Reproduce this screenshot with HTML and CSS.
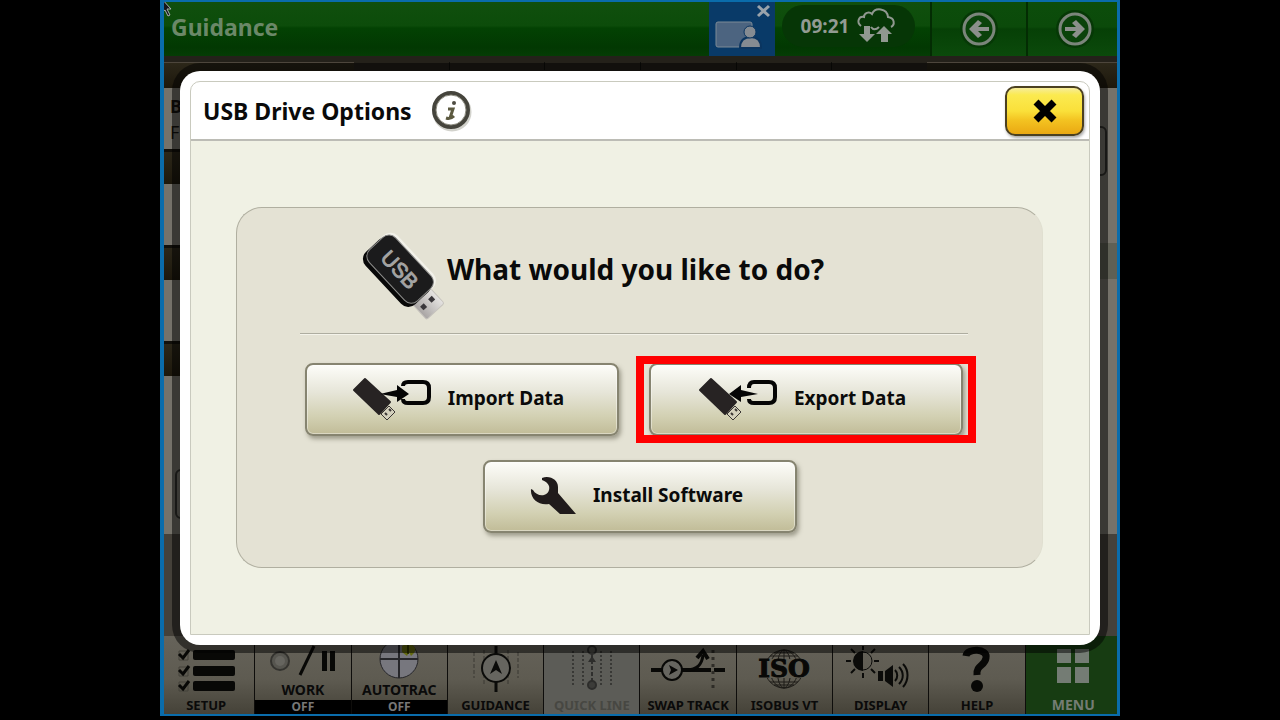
FILE: index.html
```html
<!DOCTYPE html>
<html lang="en">
<head>
    <meta charset="UTF-8">
    <meta name="viewport" content="width=device-width, initial-scale=1.0">
    <title>Guidance - USB Drive Options</title>
    <link rel="stylesheet" href="styles.css">
</head>
<body>
    <div class="display">
        <header class="topbar">
            <h1 class="topbar-title">Guidance</h1>
            <button class="remote" aria-label="Remote display access">
                <svg width="66" height="50" viewBox="0 0 66 50">
                    <rect x="7" y="18" width="36" height="25" rx="2" fill="#4c6480" stroke="#7d8a96"/>
                    <path d="M31 44c0-7 4-11 11-11s10 4 10 11z" fill="#858b92" stroke="#0b3560" stroke-width="2"/>
                    <circle cx="41" cy="28" r="6" fill="#858b92" stroke="#0b3560" stroke-width="1"/>
                    <path d="M49 2l11 10M60 2L49 12" stroke="#9aa3ab" stroke-width="3"/>
                </svg>
            </button>
            <div class="status">
                <span>09:21</span>
                <svg width="40" height="36" viewBox="0 0 40 36">
                    <path d="M5 18C0 14 3 8 8 9c0-4 5-6 8-3 3-7 15-6 16 3 7 1 7 8 3 10M15 19c2 3 5 3 8 0" fill="none" stroke="#909890" stroke-width="2"/>
                    <path d="M8 18h6v8h5l-8 8-8-8h5z M25 34v-8h-5l8-8 8 8h-4v8z" fill="#909890"/>
                </svg>
            </div>
            <button class="nav-btn" aria-label="Back">
                <svg width="38" height="38" viewBox="0 0 38 38">
                    <circle cx="19" cy="19" r="19" fill="#063806"/>
                    <circle cx="19" cy="19" r="15" fill="#0a420a" stroke="#7b857b" stroke-width="3"/>
                    <path d="M9 19l9-9 4 3-4 4h11v4H18l4 4-4 3z" fill="#8b8f8b"/>
                </svg>
            </button>
            <button class="nav-btn" aria-label="Forward">
                <svg width="38" height="38" viewBox="0 0 38 38">
                    <circle cx="19" cy="19" r="19" fill="#063806"/>
                    <circle cx="19" cy="19" r="15" fill="#0a420a" stroke="#7b857b" stroke-width="3"/>
                    <path d="M29 19l-9-9-4 3 4 4H9v4h11l-4 4 4 3z" fill="#8b8f8b"/>
                </svg>
            </button>
        </header>

        <main class="workspace">
            <div class="column">
                <div class="bar bar-top"></div>
                <div class="tile"><b>B</b><span>F</span></div>
                <div class="bar"></div>
                <div class="tile"></div>
                <div class="bar"></div>
                <div class="tile"></div>
                <div class="bar"></div>
                <div class="tile tile-large"><div class="ghost-btn"></div></div>
            </div>
            <div class="middle"><i></i><i></i><i></i><i></i><i></i></div>
            <div class="column column-right">
                <div class="bar bar-top"></div>
                <div class="tile tile-tall"><div class="ghost-btn"></div></div>
                <div class="bar bar-soft"></div>
                <div class="tile tile-large"></div>
            </div>
        </main>

        <nav class="tabs">
            <button class="tab">
                <svg class="icon" width="60" height="48" viewBox="0 0 60 48">
                    <g fill="#080806">
                        <rect x="17" y="4" width="42" height="10" rx="2"/>
                        <rect x="17" y="20" width="42" height="10" rx="2"/>
                        <rect x="17" y="35" width="42" height="10" rx="2"/>
                    </g>
                    <path d="M3 5h9v9H3zM3 21h9v9H3zM3 36h9v9H3z" fill="none" stroke="#45423a"/>
                    <path d="M3 8l4 4 6-8M3 24l4 4 6-8M3 39l4 4 6-8" fill="none" stroke="#080806" stroke-width="3"/>
                </svg>
                <span>SETUP</span>
            </button>
            <button class="tab tab-state">
                <svg class="icon" width="70" height="32" viewBox="0 0 70 32">
                    <circle cx="12" cy="15" r="9" fill="#56554f" stroke="#34332f" stroke-width="2"/>
                    <circle cx="12" cy="15" r="5" fill="#66655f"/>
                    <path d="M32 29L46 0" stroke="#080806" stroke-width="3"/>
                    <path d="M54 5h5v20h-5zM62 5h5v20h-5z" fill="#080806"/>
                </svg>
                <span>WORK</span>
                <small>OFF</small>
            </button>
            <button class="tab tab-state">
                <svg class="icon" width="44" height="36" viewBox="0 0 44 36">
                    <circle cx="22" cy="17" r="19" fill="#77777e" stroke="#26262a"/>
                    <path d="M22 0v36M3 17h38" stroke="#26262a" stroke-width="2"/>
                    <path d="M25 4c4-3 11-3 13 2 1 4-2 6-4 8l-2-4-2 4-5-4z" fill="#646b10"/>
                    <path d="M31 2v10" stroke="#303600" stroke-width="2"/>
                </svg>
                <span>AUTOTRAC</span>
                <small>OFF</small>
            </button>
            <button class="tab">
                <svg class="icon" width="52" height="48" viewBox="0 0 52 48">
                    <path d="M26 0v46" stroke="#0b0b09" stroke-width="3"/>
                    <path d="M4 6v26M48 6v26M14 4v34M38 4v34" stroke="#3b3932" stroke-dasharray="4 2"/>
                    <circle cx="26" cy="22" r="14" fill="#66655f" stroke="#0b0b09" stroke-width="2"/>
                    <path d="M26 14l6 14-6-4-6 4z" fill="#0b0b09"/>
                </svg>
                <span>GUIDANCE</span>
            </button>
            <button class="tab tab-disabled" disabled>
                <svg class="icon" width="48" height="48" viewBox="0 0 48 48">
                    <path d="M5 5v36M15 5v36M33 5v36M43 5v36" stroke="#383835" stroke-width="2" stroke-dasharray="2 2"/>
                    <path d="M24 8v30" stroke="#2f2f2d" stroke-width="2" stroke-dasharray="4 2"/>
                    <circle cx="24" cy="4" r="4" fill="#55554f" stroke="#2d2d2b" stroke-width="2"/>
                    <circle cx="24" cy="39" r="4" fill="#3c3c39" stroke="#2d2d2b" stroke-width="2"/>
                    <path d="M24 10l4 6h-8z" fill="#2d2d2b"/>
                </svg>
                <span>QUICK LINE</span>
            </button>
            <button class="tab">
                <svg class="icon" width="76" height="48" viewBox="0 0 76 48">
                    <path d="M1 24h60M64 24h11" stroke="#080806" stroke-width="4"/>
                    <path d="M36 24c12 0 16-6 17-15" fill="none" stroke="#080806" stroke-width="3"/>
                    <path d="M47 12l6-7 5 8" fill="none" stroke="#080806" stroke-width="4"/>
                    <path d="M63 4v42" stroke="#2e2c27" stroke-width="3" stroke-dasharray="3 4"/>
                    <circle cx="22" cy="24" r="10" fill="#66655f" stroke="#080806" stroke-width="2"/>
                    <path d="M28 24l-9-5 2 5-2 5z" fill="#080806"/>
                </svg>
                <span>SWAP TRACK</span>
            </button>
            <button class="tab">
                <svg class="icon" width="52" height="48" viewBox="0 0 52 48">
                    <g fill="none" stroke="#1d1b17">
                        <circle cx="26" cy="23" r="19"/>
                        <ellipse cx="26" cy="23" rx="7" ry="19"/>
                        <ellipse cx="26" cy="23" rx="14" ry="19"/>
                        <path d="M26 4v38M12 10h28M16 7h20M12 36h28M16 39h20"/>
                    </g>
                    <path d="M4 13h44v19H4z" fill="#605d53"/>
                    <text class="iso" x="26" y="31" text-anchor="middle">ISO</text>
                </svg>
                <span>ISOBUS VT</span>
            </button>
            <button class="tab">
                <svg class="icon" width="64" height="48" viewBox="0 0 64 48">
                    <g stroke="#0b0b09" stroke-width="2" fill="none">
                        <path d="M14 0v4M14 27v5M-3 15h5M25 15h5M2 3l4 4M26 3l-4 4M2 27l4-4M26 27l-4-4"/>
                        <circle cx="14" cy="15" r="9" stroke-width="1"/>
                        <path d="M46 24c3 3 3 8 0 11M50 21c5 5 5 12 0 17M54 18c6 6 6 16 0 23"/>
                    </g>
                    <path d="M14 5a10 10 0 0 0 0 20z" fill="#0b0b09"/>
                    <path d="M29 25h5v10h-5zM36 25l8-6v22l-8-6z" fill="#0b0b09"/>
                </svg>
                <span>DISPLAY</span>
            </button>
            <button class="tab">
                <svg class="icon" width="30" height="48" viewBox="0 0 30 48">
                    <path d="M4 10C5 2 26 2 24 12c-1 8-10 7-9 17" fill="none" stroke="#080806" stroke-width="7"/>
                    <circle cx="15" cy="40" r="6" fill="#080806"/>
                </svg>
                <span>HELP</span>
            </button>
            <button class="tab tab-menu">
                <svg class="icon" width="34" height="48" viewBox="0 0 34 48">
                    <path d="M1 3h14v14H1zM19 3h14v14H19zM1 21h14v16H1zM19 21h14v16H19z" fill="#747c74"/>
                </svg>
                <span>MENU</span>
            </button>
        </nav>

        <section class="dialog" role="dialog" aria-labelledby="dialog-title">
            <div class="dialog-frame">
                <div class="dialog-header">
                    <h2 id="dialog-title">USB Drive Options</h2>
                    <button class="info-btn" aria-label="Information">
                        <svg width="42" height="42" viewBox="0 0 42 42">
                            <circle cx="22" cy="22" r="18" fill="none" stroke="#d2d2cc" stroke-width="3"/>
                            <circle cx="21" cy="20" r="17" fill="#fff" stroke="#45443c" stroke-width="4"/>
                            <circle cx="21" cy="20" r="15" fill="none" stroke="#8d8c80" stroke-width="1"/>
                            <circle cx="24" cy="13" r="2" fill="#4e4c42"/>
                            <path d="M18 19h5l-3 9M16 28c3 1 6 0 8-2" fill="none" stroke="#5c5a40" stroke-width="3"/>
                        </svg>
                    </button>
                    <button class="close-btn" aria-label="Close">
                        <svg width="26" height="26" viewBox="0 0 26 26">
                            <path d="M4 4l18 18M22 4L4 22" stroke="#000" stroke-width="7"/>
                        </svg>
                    </button>
                </div>
                <div class="dialog-body">
                    <div class="panel">
                        <div class="question">
                            <svg width="86" height="92" viewBox="0 0 86 92">
                                <defs>
                                    <linearGradient id="plug" x1="0" y1="0" x2="0" y2="1">
                                        <stop offset="0" stop-color="#e6e4e2"/>
                                        <stop offset="1" stop-color="#a8a4a3"/>
                                    </linearGradient>
                                </defs>
                                <g transform="rotate(47 41 45)">
                                    <rect x="66" y="32" width="23" height="24" rx="2" fill="url(#plug)" stroke="#c6c3bd"/>
                                    <rect x="75" y="36" width="5" height="5" fill="#39363a"/>
                                    <rect x="75" y="47" width="5" height="5" fill="#39363a"/>
                                    <rect x="-2" y="20" width="72" height="38" rx="10" fill="#f3f2ea"/>
                                    <rect x="-2" y="26" width="72" height="38" rx="10" fill="#080808"/>
                                    <rect x="-1" y="23" width="70" height="36" rx="9" fill="#1b1b1c" stroke="#8c8c8a" stroke-width="1"/>
                                    <text class="usb-text" x="34" y="49" text-anchor="middle">USB</text>
                                </g>
                            </svg>
                            <h3>What would you like to do?</h3>
                        </div>
                        <div class="choices">
                            <button class="choice">
                                <svg width="80" height="46" viewBox="0 0 80 46">
                                    <path d="M13 4L2 15l25 24 11-12z" fill="#272323" stroke="#272323" stroke-width="2" stroke-linejoin="round"/>
                                    <path d="M37 31l6 6-8 8-6-6z" fill="#d4d1bd" stroke="#3b3735" stroke-width="1"/>
                                    <path d="M33 38l2 2M37 34l2 2" stroke="#3b3735" stroke-width="2"/>
                                    <path d="M51 11c0-3 2-4 5-4h15c4 0 6 2 6 6v9c0 4-2 6-6 6H56c-3 0-5-1-5-4" fill="none" stroke="#050505" stroke-width="4"/>
                                    <path d="M28 19l17-4v-5l12 9-12 8v-5z" fill="#050505"/>
                                </svg>
                                Import Data
                            </button>
                            <div class="highlight">
                                <button class="choice">
                                    <svg width="80" height="46" viewBox="0 0 80 46">
                                        <path d="M13 4L2 15l25 24 11-12z" fill="#272323" stroke="#272323" stroke-width="2" stroke-linejoin="round"/>
                                        <path d="M37 31l6 6-8 8-6-6z" fill="#d4d1bd" stroke="#3b3735" stroke-width="1"/>
                                        <path d="M33 38l2 2M37 34l2 2" stroke="#3b3735" stroke-width="2"/>
                                        <path d="M51 13c0-4 2-6 5-6h15c4 0 6 2 6 6v9c0 4-2 6-6 6H56c-3 0-5-1-5-4" fill="none" stroke="#050505" stroke-width="4"/>
                                        <path d="M60 19l-17-4v-5l-12 9 12 8v-5z" fill="#050505"/>
                                    </svg>
                                    Export Data
                                </button>
                            </div>
                        </div>
                        <button class="choice choice-single">
                            <svg width="48" height="38" viewBox="0 0 48 38">
                                <path d="M13 2C21-1 29 4 29 11v6l18 21H31L20 28C10 30 1 23 2 13l2 1c2 4 7 6 11 5 4-1 6-5 5-9-1-3-4-5-7-6z" fill="#201b1b"/>
                            </svg>
                            Install Software
                        </button>
                    </div>
                </div>
            </div>
        </section>

        <svg class="pointer" width="12" height="16" viewBox="0 0 12 16">
            <path d="M0-3v15l4-3 3 6 2-1-3-6h4z" fill="#15171a" stroke="#a9adb0"/>
        </svg>
    </div>
</body>
</html>
```
FILE: styles.css
```css
* { box-sizing: border-box; }

body {
    margin: 0;
    background: #000;
    font-family: "Noto Sans", "Open Sans", sans-serif;
    color: #0a0a0a;
}

h1, h2, h3 { margin: 0; font-weight: bold; }

button {
    font: inherit;
    color: inherit;
    border: 0;
    padding: 0;
    margin: 0;
    background: none;
    cursor: pointer;
}

svg { display: block; flex: none; overflow: visible; }

.display {
    position: relative;
    display: flex;
    flex-direction: column;
    width: 75%;
    height: calc(100vh - 4px);
    min-height: 640px;
    margin: 0 auto;
    border: solid #0a6cab;
    border-width: 2px 3px 2px 4px;
    overflow: hidden;
    background: #24211a;
}

/* Top bar */
.topbar {
    display: flex;
    flex: none;
    height: 54px;
    background: linear-gradient(#104f0d 0, #0c4c0a 44%, #034203 48%, #023802 85%, #053c05 100%);
}

.topbar-title {
    flex: 1;
    padding-left: 7px;
    font-size: 23px;
    line-height: 50px;
    color: #6b8868;
}

.remote {
    display: flex;
    align-items: center;
    width: 66px;
    background: #093a68;
}

.status {
    display: flex;
    align-items: center;
    justify-content: center;
    gap: 7px;
    width: 133px;
    height: 42px;
    margin: 3px 15px 0 7px;
    border-radius: 21px;
    background: #063606;
    font-size: 19px;
    font-weight: bold;
    color: #939b93;
}

.nav-btn {
    display: flex;
    align-items: center;
    justify-content: center;
    width: 96px;
    border-left: 2px solid #032c03;
    background: linear-gradient(#0c4d0b 0, #0b4a0a 46%, #064006 50%, #0b4a0b 100%);
}

.nav-btn:last-child { width: 91px; padding-left: 4px; }

/* Page behind the dialog */
.workspace {
    display: flex;
    flex: 1;
    padding-top: 6px;
    min-height: 0;
}

.column {
    display: flex;
    flex-direction: column;
    width: 190px;
    padding-bottom: 102px;
    background: #45413a;
}

.middle {
    display: flex;
    justify-content: space-evenly;
    flex: 1;
    background: #24211a;
}

.middle i { width: 1px; height: 8px; background: #0f0e0b; }

.bar {
    flex: none;
    height: 35px;
    border-top: 3px solid #12100b;
    background: linear-gradient(#2c2719, #1d180c);
}

.bar-top { height: 26px; border-top: 1px solid #4d463c; }
.bar-soft { height: 36px; border: 0; background: #5f6055; }

.tile {
    flex: none;
    height: 61px;
    padding: 5px 6px;
    background: #75726a;
    font-size: 18px;
    line-height: 26px;
    color: #14130f;
}

.tile b, .tile span { display: block; }
.tile-tall { height: 155px; }
.tile-large { flex: 1; }

.column .ghost-btn {
    width: 100%;
    height: 50px;
    border: 2px solid #30302c;
    border-radius: 6px;
}

.tile-large .ghost-btn { margin: 88px 0 0 5px; }
.column-right .tile { padding: 38px 10px 0; }

/* Bottom tabs */
.tabs {
    display: grid;
    grid-template-columns: 90fr repeat(8, 96fr) 92fr;
    flex: none;
    height: 78px;
    font-size: 13px;
    font-weight: bold;
    line-height: 18px;
}

.tab {
    display: flex;
    flex-direction: column;
    align-items: center;
    justify-content: flex-end;
    min-width: 0;
    border-left: 1px solid #0e0d0b;
    background: linear-gradient(#66635a, #5e5b51 55%, #454238);
    white-space: nowrap;
}

.tab:first-child { border-left: 0; padding-right: 6px; }
.tab .icon { margin-bottom: 2px; }

.tab small {
    align-self: stretch;
    background: #000;
    font-size: 12px;
    line-height: 14px;
    color: #777;
}

.tab-state { font-size: 14px; }
.tab-state span { line-height: 20px; }
.tab-disabled { background: #5c5c57; color: #474742; }

.tab-menu {
    padding-left: 4px;
    background: #173c12;
    font-size: 14px;
    color: #747c74;
}

.iso {
    font: bold 25px "DejaVu Serif", "Liberation Serif", serif;
    fill: #080806;
    stroke: #080806;
    stroke-width: 1px;
}

/* Dialog */
.dialog {
    position: absolute;
    inset: 69px 17px 69px 16px;
    padding: 10px;
    border-radius: 20px;
    background: #fff;
    box-shadow: 0 0 0 8px rgba(0, 0, 0, .5);
}

.dialog-frame {
    display: flex;
    flex-direction: column;
    height: 100%;
    border: 1px solid #c9cabe;
    border-radius: 10px 10px 0 0;
}

.dialog-header {
    display: flex;
    align-items: center;
    height: 59px;
    padding: 0 5px 0 12px;
    border-bottom: 2px solid #bcbcb5;
}

.dialog-header h2 { font-size: 23px; }
.info-btn { margin-left: 18px; }

.close-btn {
    display: flex;
    align-items: center;
    justify-content: center;
    width: 79px;
    height: 50px;
    margin-left: auto;
    border: 2px solid #4b4020;
    border-radius: 10px;
    background: linear-gradient(#f6ec9a, #fbea50 15%, #fae03a 50%, #f3c321 70%, #eaa812);
    box-shadow: 1px 2px 3px #aaa;
}

.dialog-body {
    flex: 1;
    padding: 66px 46px 66px 45px;
    background: #f0f1e4;
}

.panel {
    height: 100%;
    padding: 24px 74px 0 63px;
    border: 1px solid #b0afa0;
    border-right-color: #e0dfd0;
    border-radius: 26px;
    background: #e4e2d4;
}

.question {
    display: flex;
    align-items: center;
    height: 102px;
    padding: 0 0 9px 61px;
    border-bottom: 1px solid #aeada0;
    box-shadow: 0 1px 0 #f4f3ea;
}

.question h3 {
    padding-bottom: 18px;
    font-size: 28px;
    line-height: 36px;
}

.usb-text {
    font: 21px "Liberation Sans", Arial, sans-serif;
    fill: #a3a3a3;
    stroke: #a3a3a3;
    stroke-width: 1px;
}

.choices {
    display: grid;
    grid-template-columns: 1fr 1fr;
    gap: 30px;
    padding: 0 5px;
    margin-top: 29px;
}

.choice {
    display: flex;
    align-items: center;
    justify-content: center;
    gap: 16px;
    width: 100%;
    height: 73px;
    padding: 0 8px 4px 0;
    border: 2px solid #868470;
    border-radius: 8px;
    background: linear-gradient(#fdfdf9, #e6e5d8 40%, #d2d0b2 75%, #c1bc98);
    box-shadow: inset 0 0 0 1px rgba(255, 255, 255, .4), 2px 3px 4px rgba(90, 88, 70, .5);
    font-size: 19px;
    font-weight: bold;
    white-space: nowrap;
}

.choice-single {
    width: 314px;
    margin: 24px auto 0 183px;
}

.highlight { position: relative; }

.highlight::after {
    content: "";
    position: absolute;
    inset: -7px -13px;
    border: 8px solid #f00;
    pointer-events: none;
}

.pointer {
    position: absolute;
    left: -3px;
    top: -1px;
}
```
